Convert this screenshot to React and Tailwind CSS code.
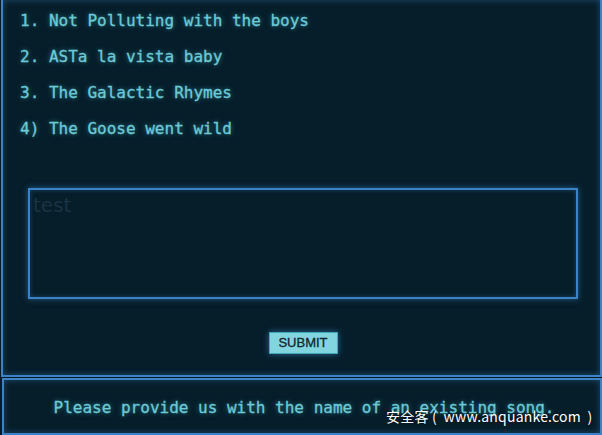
const SONGS = [
  "1. Not Polluting with the boys",
  "2. ASTa la vista baby",
  "3. The Galactic Rhymes",
  "4) The Goose went wild",
];

const glowText = "[text-shadow:0_0_5px_rgba(80,200,220,0.6)]";

export default function App() {
  return (
    <div className="relative w-[602px] h-[435px] overflow-hidden bg-[#061b26] font-['DejaVu_Sans_Mono',monospace]">
      {/* main panel, its top is scrolled off */}
      <div className="ml-px w-[601px] h-[377px] border-2 border-t-0 border-[#3b82c6] bg-[#061e2a] shadow-[inset_0_0_6px_rgba(59,130,198,0.45)] flex flex-col">
        <div className={`pt-[3px] pl-[17px] text-[16px] leading-[36px] text-[#6ccad6] [-webkit-text-stroke:0.3px_#6ccad6] ${glowText}`}>
          {SONGS.map((s) => (
            <p key={s} className="whitespace-pre">{s}</p>
          ))}
        </div>

        <textarea
          placeholder="test"
          className="mt-[41px] ml-[25px] w-[550px] h-[111px] resize-none border-2 border-[#3b82c6] bg-[#061e2a] px-[3px] py-[3px] text-[20px] leading-6 text-[#6ccad6] font-['DejaVu_Sans',sans-serif] placeholder:text-[#1b3341] shadow-[0_0_6px_rgba(59,130,198,0.6),inset_0_0_4px_rgba(59,130,198,0.4)] outline-none"
        />

        <div className="mt-[33px] flex justify-center pl-[3px]">
          <button className="w-[69px] h-[22px] border border-[#3fa6b8] bg-[#80d5df] text-[13px] font-['Liberation_Sans',Arial,sans-serif] text-[#10262c] [-webkit-text-stroke:0.3px_#10262c] shadow-[0_0_6px_rgba(59,130,198,0.7)]">
            SUBMIT
          </button>
        </div>
      </div>

      {/* message panel */}
      <div className="mt-[1px] ml-[2px] w-[600px] h-[57px] border-2 border-[#3b82c6] bg-[#061e2a] shadow-[inset_0_0_6px_rgba(59,130,198,0.45)] flex items-center justify-center">
        <p className={`pt-[3px] pl-[4px] text-[16px] text-[#6ccad6] [-webkit-text-stroke:0.3px_#6ccad6] whitespace-pre ${glowText}`}>
          Please provide us with the name of an existing song.
        </p>
      </div>

      <span className="absolute left-[386px] top-[406px] whitespace-pre text-[14px] tracking-[0.2px] text-white font-['Noto_Sans_CJK_SC','Noto_Sans',sans-serif] [text-shadow:0_0_2px_rgba(0,0,0,0.6)]">
        安全客 (  www.anquanke.com  )
      </span>
    </div>
  );
}
